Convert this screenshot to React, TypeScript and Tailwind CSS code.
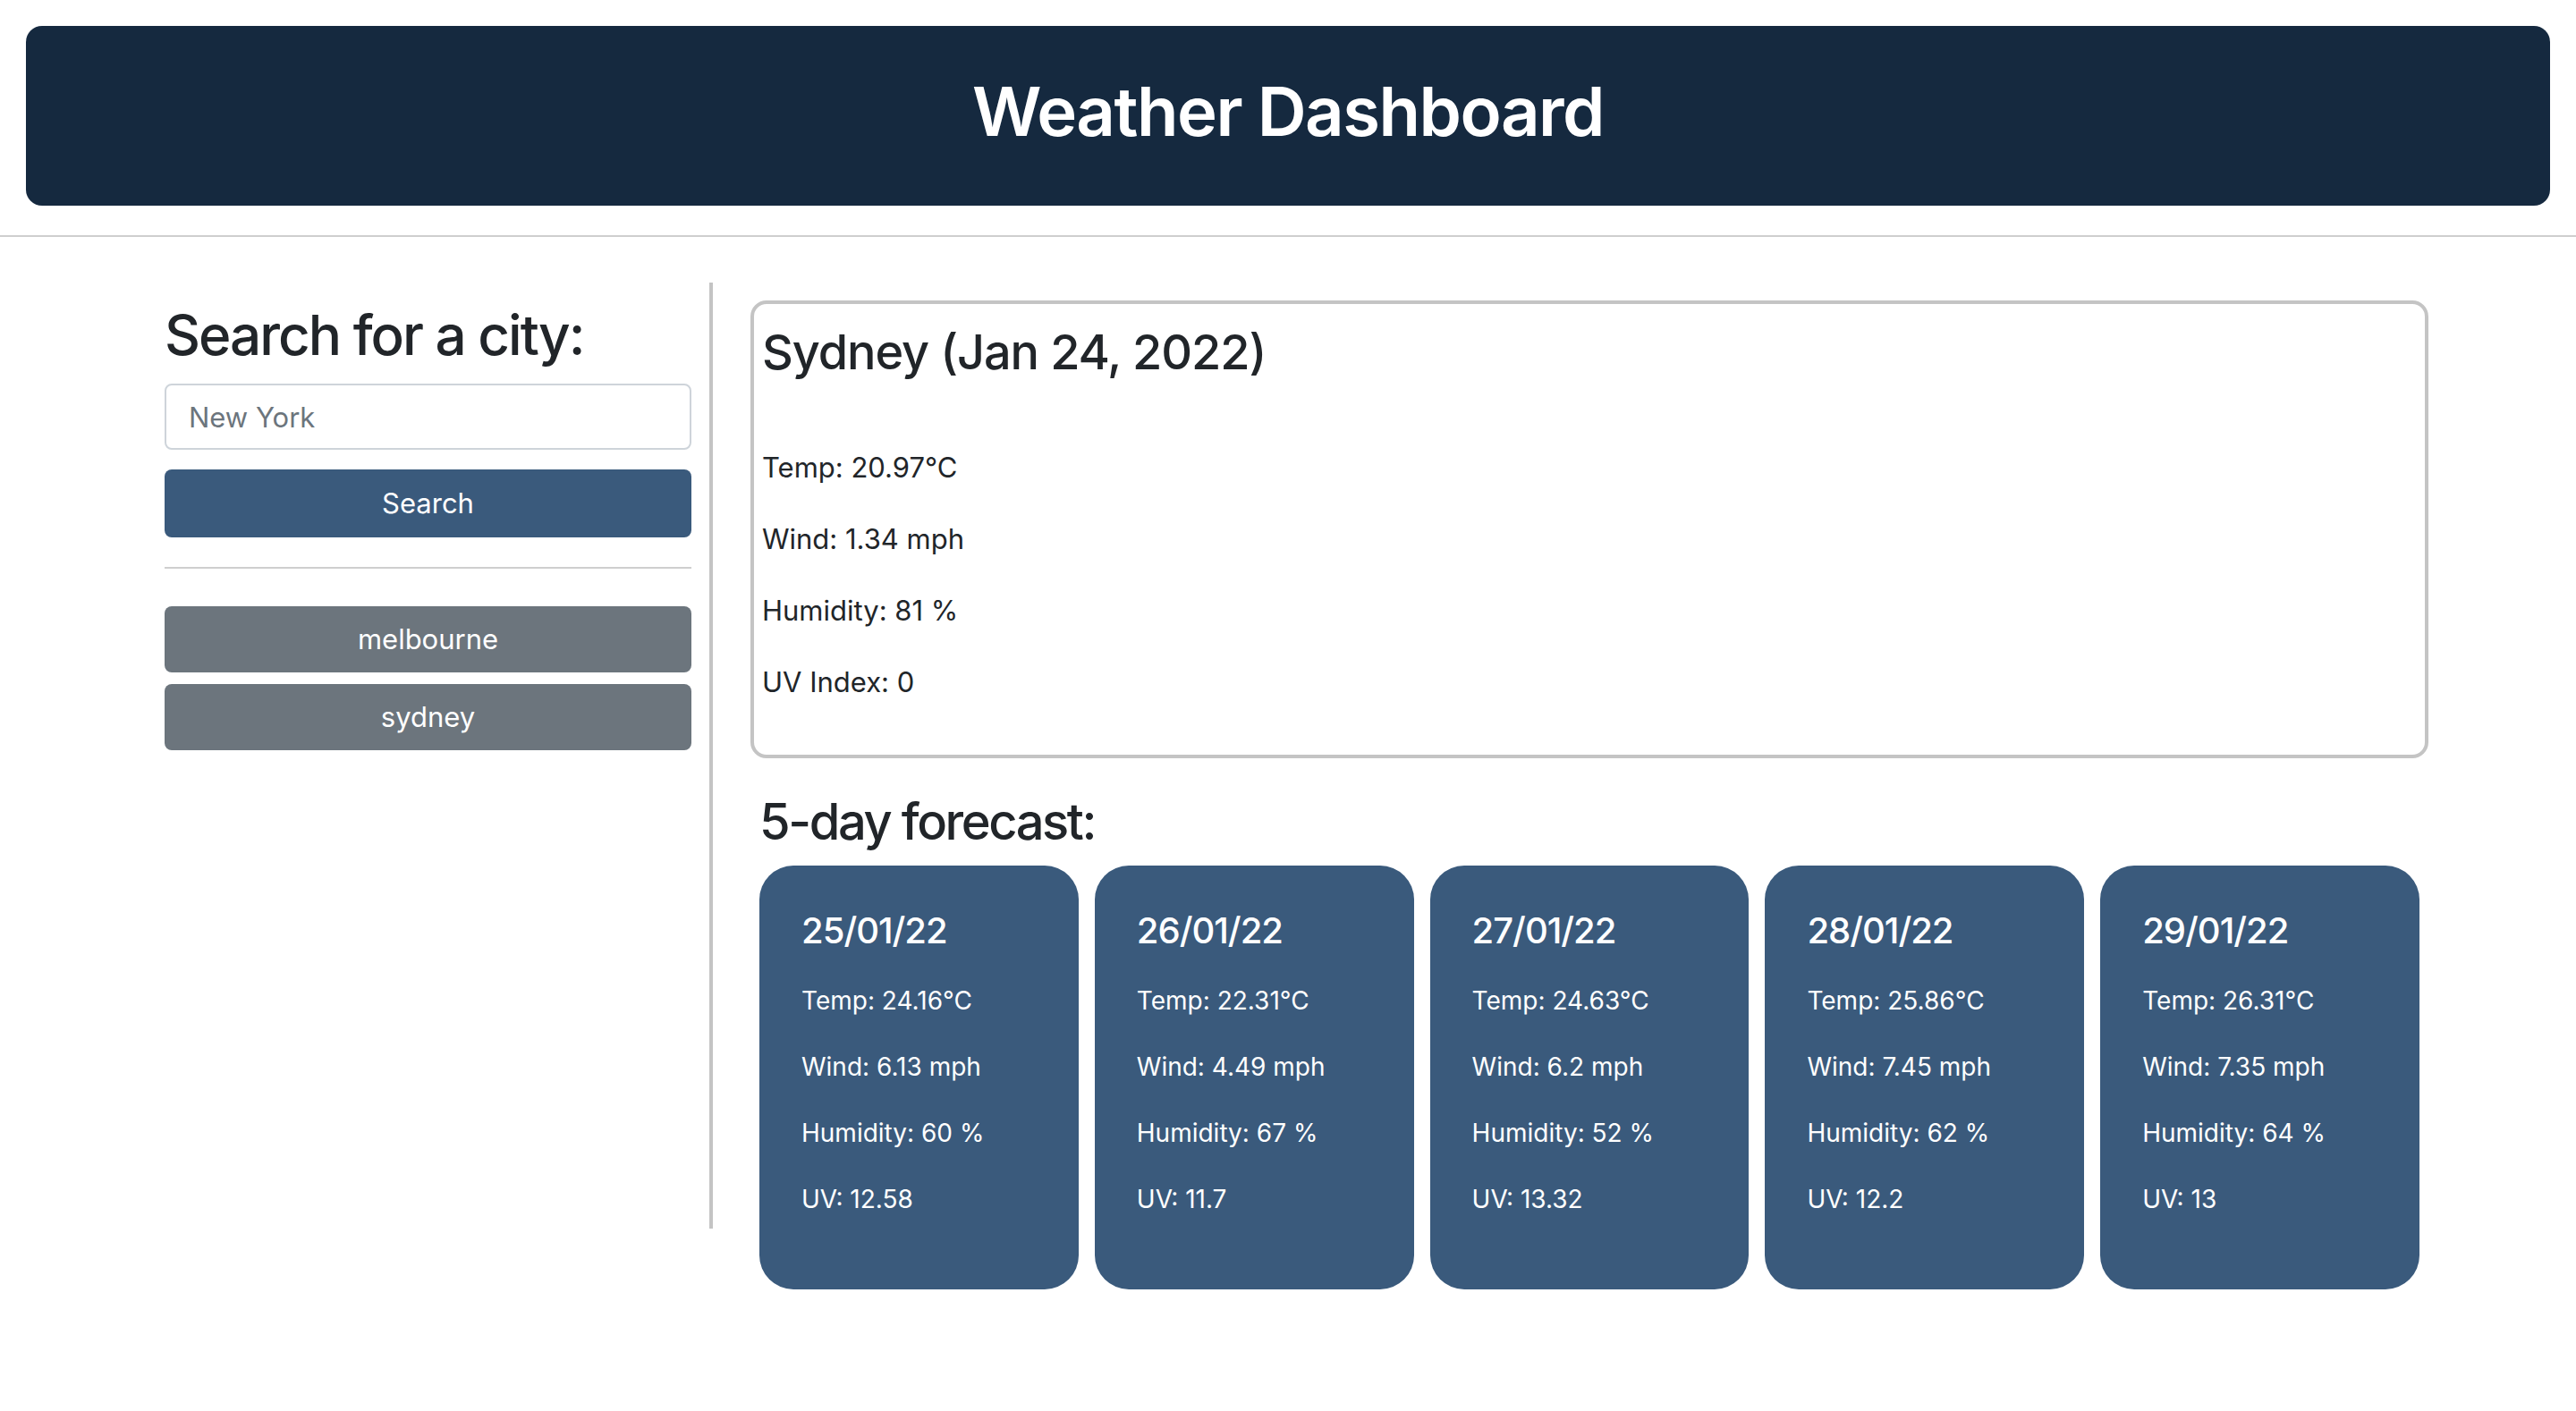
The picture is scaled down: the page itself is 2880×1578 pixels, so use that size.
import React from 'react';

interface Day {
    date: string;
    temp: string;
    wind: string;
    humidity: string;
    uv: string;
}

const forecast: Day[] = [
    { date: '25/01/22', temp: '24.16', wind: '6.13', humidity: '60', uv: '12.58' },
    { date: '26/01/22', temp: '22.31', wind: '4.49', humidity: '67', uv: '11.7' },
    { date: '27/01/22', temp: '24.63', wind: '6.2', humidity: '52', uv: '13.32' },
    { date: '28/01/22', temp: '25.86', wind: '7.45', humidity: '62', uv: '12.2' },
    { date: '29/01/22', temp: '26.31', wind: '7.35', humidity: '64', uv: '13' },
];

const history = ['melbourne', 'sydney'];

export default function App() {
    return (
        <div className="min-h-screen bg-white text-[#212529] font-['Inter','Liberation_Sans',sans-serif]">
            <div className="px-[29px] pt-[29px]">
                <header className="h-[201px] rounded-[18px] bg-[#15293f] flex items-center justify-center pb-[12px]">
                    <h1 className="text-[76px] font-semibold text-white tracking-[-1.5px]">Weather Dashboard</h1>
                </header>
            </div>
            <div className="mt-[33px] h-[2px] bg-[#cfcfcf]" />

            <div className="flex items-start pt-[51px]">
                {/* search + history */}
                <aside className="ml-[184px] w-[613px] h-[1058px] border-r-4 border-[#c4c4c4] pr-[20px] pt-[22px]">
                    <h2 className="text-[62px] font-medium leading-[1.2] mb-[17px] tracking-[-2px]">Search for a city:</h2>
                    <input
                        type="text"
                        placeholder="New York"
                        className="block w-full h-[74px] border-2 border-[#ced4da] rounded-[8px] px-[25px] text-[31px] text-[#495057] placeholder:text-[#6c757d] outline-none"
                    />
                    <button className="mt-[22px] w-full h-[76px] rounded-[8px] bg-[#3a5a7c] text-white text-[31px]">
                        Search
                    </button>
                    <div className="mt-[33px] h-[2px] bg-[#cfcfcf]" />
                    <div className="mt-[42px] flex flex-col gap-[13px]">
                        {history.map((city) => (
                            <button key={city} className="w-full h-[74px] rounded-[8px] bg-[#6c757d] text-white text-[31px]">
                                {city}
                            </button>
                        ))}
                    </div>
                </aside>

                {/* current + forecast */}
                <main className="ml-[42px] w-[1876px] pt-[20px]">
                    <section className="border-4 border-[#c4c4c4] rounded-[18px] pt-[22px] pl-[9px] pb-[25px]">
                        <h3 className="text-[54px] font-medium leading-[1.2] mb-[72px] tracking-[-1.1px]">Sydney (Jan 24, 2022)</h3>
                        <p className="text-[31px] leading-[48px] mb-[32px]">Temp: 20.97°C</p>
                        <p className="text-[31px] leading-[48px] mb-[32px]">Wind: 1.34 mph</p>
                        <p className="text-[31px] leading-[48px] mb-[32px]">Humidity: 81 %</p>
                        <p className="text-[31px] leading-[48px] mb-[32px]">UV Index: 0</p>
                    </section>

                    <h2 className="ml-[10px] mt-[38px] mb-[15px] text-[56px] font-medium leading-[1.2] tracking-[-2.4px]">5-day forecast:</h2>
                    <div className="ml-[10px] w-[1856px] grid grid-cols-5 gap-[18px]">
                        {forecast.map((day) => (
                            <div key={day.date} className="bg-[#3a5a7c] rounded-[38px] text-white px-[47px] pt-[48px] pb-[48px]">
                                <h5 className="text-[40px] font-medium leading-[50px] mb-[32px] tracking-[-1px]">{day.date}</h5>
                                <p className="text-[28px] leading-[42px] mb-[32px]">Temp: {day.temp}°C</p>
                                <p className="text-[28px] leading-[42px] mb-[32px]">Wind: {day.wind} mph</p>
                                <p className="text-[28px] leading-[42px] mb-[32px]">Humidity: {day.humidity} %</p>
                                <p className="text-[28px] leading-[42px] mb-[32px]">UV: {day.uv}</p>
                            </div>
                        ))}
                    </div>
                </main>
            </div>
        </div>
    );
}
